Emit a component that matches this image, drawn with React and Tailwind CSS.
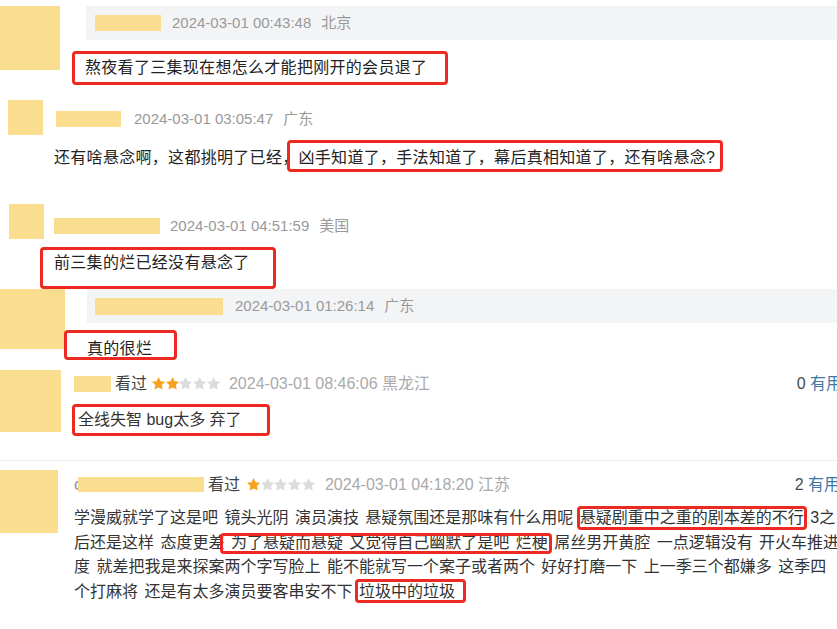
import React from 'react';

// Redaction blocks and annotation frames used across the collage
const YELLOW = 'bg-[#fbdd90]';

function RedBox({ pos }) {
  return <div className={`pointer-events-none absolute rounded-[4px] border-[3px] border-[#ec2a22] ${pos}`} />;
}

function Stars({ filled }) {
  return (
    <span className="flex items-center gap-[0.5px]">
      {[0, 1, 2, 3, 4].map((i) => (
        <svg
          key={i}
          viewBox="2 2 20 20"
          className={i < filled ? 'h-[13.2px] w-[13.2px] fill-[#f7a31d]' : 'h-[13.2px] w-[13.2px] fill-[#dcdcdc]'}
        >
          <path d="M12 2l3.09 6.26L22 9.27l-5 4.87 1.18 6.88L12 17.77l-6.18 3.25L7 14.14 2 9.27l6.91-1.01L12 2z" />
        </svg>
      ))}
    </span>
  );
}

function Meta({ date, place, className }) {
  return (
    <>
      <span className={`text-[15px] text-[#999] ${className}`}>{date}</span>
      <span className="ml-[10px] text-[15px] text-[#999]">{place}</span>
    </>
  );
}

export default function App() {
  return (
    <div className="h-[629px] w-[837px] overflow-hidden bg-white font-['Liberation_Sans','Noto_Sans_CJK_SC',sans-serif]">
      {/* reply 1 */}
      <section className="relative h-[95px]">
        <div className="flex pt-[6px]">
          <div className={`h-[64px] w-[60px] shrink-0 ${YELLOW}`} />
          <div className="ml-[26px] flex-1">
            <div className="flex h-[34px] items-center bg-[#f3f4f6] pl-[9px]">
              <div className={`h-[16px] w-[66px] ${YELLOW}`} />
              <Meta date="2024-03-01 00:43:48" place="北京" className="ml-[11px]" />
            </div>
            <p className="-ml-px mt-[16px] whitespace-nowrap text-[16px] leading-[24px] tracking-[0.3px] text-[#222]">
              熬夜看了三集现在想怎么才能把刚开的会员退了
            </p>
          </div>
        </div>
        <RedBox pos="left-[72px] top-[51px] h-[34px] w-[376px]" />
      </section>

      {/* reply 2 */}
      <section className="relative h-[100px]">
        <div className="flex items-start pl-[8px] pt-[5px]">
          <div className={`h-[35px] w-[35px] shrink-0 ${YELLOW}`} />
          <div className="ml-[13px] mt-[7px] flex h-[24px] items-center">
            <div className={`h-[16px] w-[65px] ${YELLOW}`} />
            <Meta date="2024-03-01 03:05:47" place="广东" className="ml-[13px]" />
          </div>
        </div>
        <p className="mt-[11px] whitespace-nowrap pl-[54px] text-[16px] leading-[24px] tracking-[0.3px] text-[#222]">
          还有啥悬念啊，这都挑明了已经，凶手知道了，手法知道了，幕后真相知道了，还有啥悬念?
        </p>
        <RedBox pos="left-[287px] top-[45px] h-[32px] w-[436px]" />
      </section>

      {/* reply 3 */}
      <section className="relative h-[94px]">
        <div className="flex items-start pl-[9px] pt-[9px]">
          <div className={`h-[35px] w-[35px] shrink-0 ${YELLOW}`} />
          <div className="ml-[10px] mt-[10px] flex h-[24px] items-center">
            <div className={`h-[16px] w-[106px] ${YELLOW}`} />
            <Meta date="2024-03-01 04:51:59" place="美国" className="ml-[10px]" />
          </div>
        </div>
        <p className="mt-[12px] whitespace-nowrap pl-[54px] text-[16px] leading-[24px] tracking-[0.3px] text-[#222]">
          前三集的烂已经没有悬念了
        </p>
        <RedBox pos="left-[40px] top-[52px] h-[42px] w-[236px]" />
      </section>

      {/* reply 4 */}
      <section className="relative h-[76px]">
        <div className="flex">
          <div className={`h-[60px] w-[65px] shrink-0 ${YELLOW}`} />
          <div className="ml-[22px] flex-1">
            <div className="flex h-[34px] items-center bg-[#f3f4f6] pl-[8px]">
              <div className={`h-[17px] w-[128px] ${YELLOW}`} />
              <Meta date="2024-03-01 01:26:14" place="广东" className="ml-[12px]" />
            </div>
            <p className="mt-[14px] whitespace-nowrap text-[16px] leading-[24px] tracking-[0.3px] text-[#222]">真的很烂</p>
          </div>
        </div>
        <RedBox pos="left-[64px] top-[41px] h-[30px] w-[113px]" />
      </section>

      {/* short review */}
      <section className="relative h-[95px]">
        <div className="flex items-start">
          <div className={`mt-[5px] h-[62px] w-[61px] shrink-0 ${YELLOW}`} />
          <div className="ml-[13px] w-[768px] shrink-0">
            <div className="mt-[7px] flex h-[24px] items-center whitespace-nowrap text-[16px]">
              <div className={`h-[16px] w-[37px] ${YELLOW}`} />
              <span className="ml-[4px] text-[#3f3f3f]">看过</span>
              <span className="ml-[5px]">
                <Stars filled={2} />
              </span>
              <span className="ml-[9px] text-[#aaa]">2024-03-01 08:46:06 黑龙江</span>
              <span className="ml-auto text-[#494949]">
                0 <span className="text-[#3f77a8]">有用</span>
              </span>
            </div>
            <p className="mt-[12px] whitespace-nowrap pl-[4px] text-[16px] leading-[24px] text-[#333]">全线失智 bug太多 弃了</p>
          </div>
        </div>
        <RedBox pos="left-[72px] top-[39px] h-[32px] w-[198px]" />
      </section>

      {/* long review */}
      <section className="relative border-t border-[#ececec]">
        <div className="flex items-start">
          <div className={`mt-[9px] h-[63px] w-[58px] shrink-0 ${YELLOW}`} />
          <div className="ml-[16px] w-[766px] shrink-0">
            <div className="mt-[12px] flex h-[24px] items-center whitespace-nowrap text-[16px]">
              <div className="relative h-[24px] w-[130px]">
                <span className="absolute left-0 top-0 leading-[24px] text-[#7d93ab]">c</span>
                <div className={`absolute left-[4px] top-[4px] h-[15px] w-[126px] ${YELLOW}`} />
              </div>
              <span className="ml-[4px] text-[#3f3f3f]">看过</span>
              <span className="ml-[7px]">
                <Stars filled={1} />
              </span>
              <span className="ml-[10px] text-[#aaa]">2024-03-01 04:18:20 江苏</span>
              <span className="ml-auto text-[#494949]">
                2 <span className="text-[#3f77a8]">有用</span>
              </span>
            </div>
            <div className="mt-[9px] whitespace-nowrap text-[16px] leading-[24.7px] text-[#333] [word-spacing:2px]">
              <div>学漫威就学了这是吧 镜头光阴 演员演技 悬疑氛围还是那味有什么用呢 悬疑剧重中之重的剧本差的不行 3之</div>
              <div>后还是这样 态度更差 为了悬疑而悬疑 又觉得自己幽默了是吧 烂梗 屌丝男开黄腔 一点逻辑没有 开火车推进</div>
              <div>度 就差把我是来探案两个字写脸上 能不能就写一个案子或者两个 好好打磨一下 上一季三个都嫌多 这季四</div>
              <div>个打麻将 还是有太多演员要客串安不下 垃圾中的垃圾</div>
            </div>
          </div>
        </div>
        <RedBox pos="left-[577px] top-[45px] h-[24px] w-[230px]" />
        <RedBox pos="left-[220px] top-[72px] h-[21px] w-[332px]" />
        <RedBox pos="left-[355px] top-[118px] h-[24px] w-[111px]" />
      </section>
    </div>
  );
}
